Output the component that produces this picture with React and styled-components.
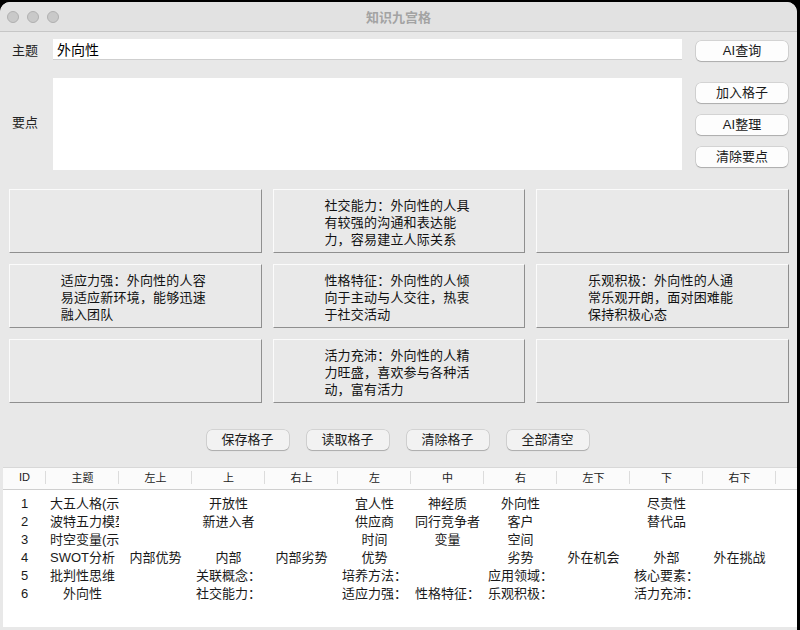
import React from 'react';
import styled, { createGlobalStyle } from 'styled-components';

const GlobalStyle = createGlobalStyle`
  html, body {
    margin: 0;
    padding: 0;
    background: #000;
    overflow: hidden;
  }
  * {
    box-sizing: border-box;
  }
`;

const FONT = `"Liberation Sans", "Noto Sans CJK SC", sans-serif`;

const Window = styled.div`
  width: 797px;
  height: 628px;
  margin-top: 2px;
  background: #e8e8e8;
  border-radius: 10px 10px 0 0;
  overflow: hidden;
  font-family: ${FONT};
  color: #1c1c1c;
  display: flex;
  flex-direction: column;
`;

const TitleBar = styled.div`
  height: 30px;
  flex-shrink: 0;
  background: #e2e2e2;
  border-bottom: 1px solid #c6c6c6;
  display: flex;
  align-items: center;
  position: relative;
`;

const Lights = styled.div`
  display: flex;
  gap: 8px;
  padding-left: 7px;
`;

const Light = styled.span`
  width: 12px;
  height: 12px;
  border-radius: 50%;
  background: #c9c9c9;
  border: 1px solid #b0b0b0;
`;

const Title = styled.div`
  position: absolute;
  left: 0;
  right: 0;
  text-align: center;
  font-size: 13px;
  font-weight: bold;
  color: #a3a3a3;
  pointer-events: none;
`;

const Form = styled.div`
  display: grid;
  grid-template-columns: 41px 629px 92px;
  padding: 7px 0 0 12px;
`;

const Label = styled.div`
  font-size: 13px;
  color: #222;
  display: flex;
  align-items: center;
  height: ${(p) => p.h || 21}px;
  margin-top: ${(p) => p.top || 0}px;
  padding-bottom: ${(p) => p.lift || 0}px;
`;

const Entry = styled.div`
  height: 21px;
  background: #fff;
  border-bottom: 1px solid #cfcfcf;
  font-size: 14px;
  color: #000;
  padding: 0 4px;
  display: flex;
  align-items: center;
`;

const TextBox = styled.div`
  height: 92px;
  background: #fff;
  margin-top: 17px;
`;

const SideCol = styled.div`
  margin-left: 14px;
  display: flex;
  flex-direction: column;
  gap: 12px;
  padding-top: ${(p) => p.top || 0}px;
`;

const Btn = styled.button`
  width: ${(p) => p.w || 92}px;
  height: 20px;
  border: none;
  border-radius: 5px;
  background: ${(p) => (p.grey ? '#f2f2f2' : '#fdfdfd')};
  box-shadow: 0 0 0 0.5px rgba(0, 0, 0, 0.18), 0 1px 1px rgba(0, 0, 0, 0.18);
  font-family: ${FONT};
  font-size: 13px;
  color: #1a1a1a;
  padding: 0;
  line-height: 20px;
  cursor: pointer;
`;

const NineGrid = styled.div`
  display: grid;
  grid-template-columns: repeat(3, 1fr);
  grid-auto-rows: 64px;
  gap: 11px;
  padding: 0 8px 0 9px;
  margin-top: 19px;
`;

const Cell = styled.div`
  background: #e9e9e9;
  border-top: 1px solid #fbfbfb;
  border-left: 1px solid #fbfbfb;
  border-bottom: 1px solid #8f8f8f;
  border-right: 1px solid #8f8f8f;
  display: flex;
  align-items: center;
  justify-content: center;
`;

const CellText = styled.div`
  text-align: left;
  font-family: "Noto Sans CJK SC", sans-serif;
  font-size: 13px;
  line-height: 17px;
  letter-spacing: 0.2px;
  color: #111;
  white-space: nowrap;
  padding-top: 0;
  margin-left: -4px;
`;

const ActionRow = styled.div`
  display: flex;
  justify-content: center;
  gap: 18px;
  margin-top: 27px;
  padding-right: 2px;
`;

const Table = styled.div`
  margin: 17px 0 0 3px;
  width: 794px;
  height: 160px;
  background: #fff;
  border-top: 1px solid #d8d8d8;
`;

const HeadRow = styled.div`
  display: grid;
  grid-template-columns: 43px repeat(10, 73px) 1fr;
  height: 22px;
  border-bottom: 1px solid #cfcfcf;
  background: #fbfbfb;
`;

const HeadCell = styled.div`
  font-size: 11px;
  color: #222;
  display: flex;
  align-items: center;
  justify-content: center;
  padding-bottom: 3px;
  position: relative;
  &::after {
    content: '';
    display: ${(p) => (p.last ? 'none' : 'block')};
    position: absolute;
    right: 0;
    top: 3px;
    bottom: 5px;
    width: 1px;
    background: #dcdcdc;
  }
`;

const Body = styled.div`
  padding-top: 5px;
`;

const DataRow = styled.div`
  display: grid;
  grid-template-columns: 43px repeat(10, 73px) 1fr;
  height: 18px;
`;

const DataCell = styled.div`
  font-size: 13px;
  line-height: 18px;
  color: #1a1a1a;
  text-align: center;
  white-space: nowrap;
  overflow: hidden;
  padding: 0 4px;
`;

const cells = [
  null,
  ['社交能力：外向性的人具', '有较强的沟通和表达能', '力，容易建立人际关系'],
  null,
  ['适应力强：外向性的人容', '易适应新环境，能够迅速', '融入团队'],
  ['性格特征：外向性的人倾', '向于主动与人交往，热衷', '于社交活动'],
  ['乐观积极：外向性的人通', '常乐观开朗，面对困难能', '保持积极心态'],
  null,
  ['活力充沛：外向性的人精', '力旺盛，喜欢参与各种活', '动，富有活力'],
  null,
];

const headers = ['ID', '主题', '左上', '上', '右上', '左', '中', '右', '左下', '下', '右下', ''];

const rows = [
  ['1', '大五人格(示例)', '', '开放性', '', '宜人性', '神经质', '外向性', '', '尽责性', ''],
  ['2', '波特五力模型', '', '新进入者', '', '供应商', '同行竞争者', '客户', '', '替代品', ''],
  ['3', '时空变量(示例)', '', '', '', '时间', '变量', '空间', '', '', ''],
  ['4', 'SWOT分析', '内部优势', '内部', '内部劣势', '优势', '', '劣势', '外在机会', '外部', '外在挑战'],
  ['5', '批判性思维', '', '关联概念：', '', '培养方法：', '', '应用领域：', '', '核心要素：', ''],
  ['6', '外向性', '', '社交能力：', '', '适应力强：', '性格特征：', '乐观积极：', '', '活力充沛：', ''],
];

export default function App() {
  return (
    <>
      <GlobalStyle />
      <Window>
        <TitleBar>
          <Lights>
            <Light />
            <Light />
            <Light />
          </Lights>
          <Title>知识九宫格</Title>
        </TitleBar>

        <Form>
          <Label lift={1}>主题</Label>
          <Entry>外向性</Entry>
          <SideCol top={2}>
            <Btn>AI查询</Btn>
          </SideCol>

          <Label h={92} top={17} lift={5}>要点</Label>
          <TextBox />
          <SideCol top={22}>
            <Btn>加入格子</Btn>
            <Btn>AI整理</Btn>
            <Btn>清除要点</Btn>
          </SideCol>
        </Form>

        <NineGrid>
          {cells.map((lines, i) => (
            <Cell key={i}>
              {lines && (
                <CellText>
                  {lines.map((l, j) => (
                    <div key={j}>{l}</div>
                  ))}
                </CellText>
              )}
            </Cell>
          ))}
        </NineGrid>

        <ActionRow>
          <Btn w={82} grey>保存格子</Btn>
          <Btn w={82} grey>读取格子</Btn>
          <Btn w={82} grey>清除格子</Btn>
          <Btn w={82} grey>全部清空</Btn>
        </ActionRow>

        <Table>
          <HeadRow>
            {headers.map((h, i) => (
              <HeadCell key={i} last={i === headers.length - 1}>{h}</HeadCell>
            ))}
          </HeadRow>
          <Body>
            {rows.map((r, i) => (
              <DataRow key={i}>
                {r.map((c, j) => (
                  <DataCell key={j}>{c}</DataCell>
                ))}
              </DataRow>
            ))}
          </Body>
        </Table>
      </Window>
    </>
  );
}
